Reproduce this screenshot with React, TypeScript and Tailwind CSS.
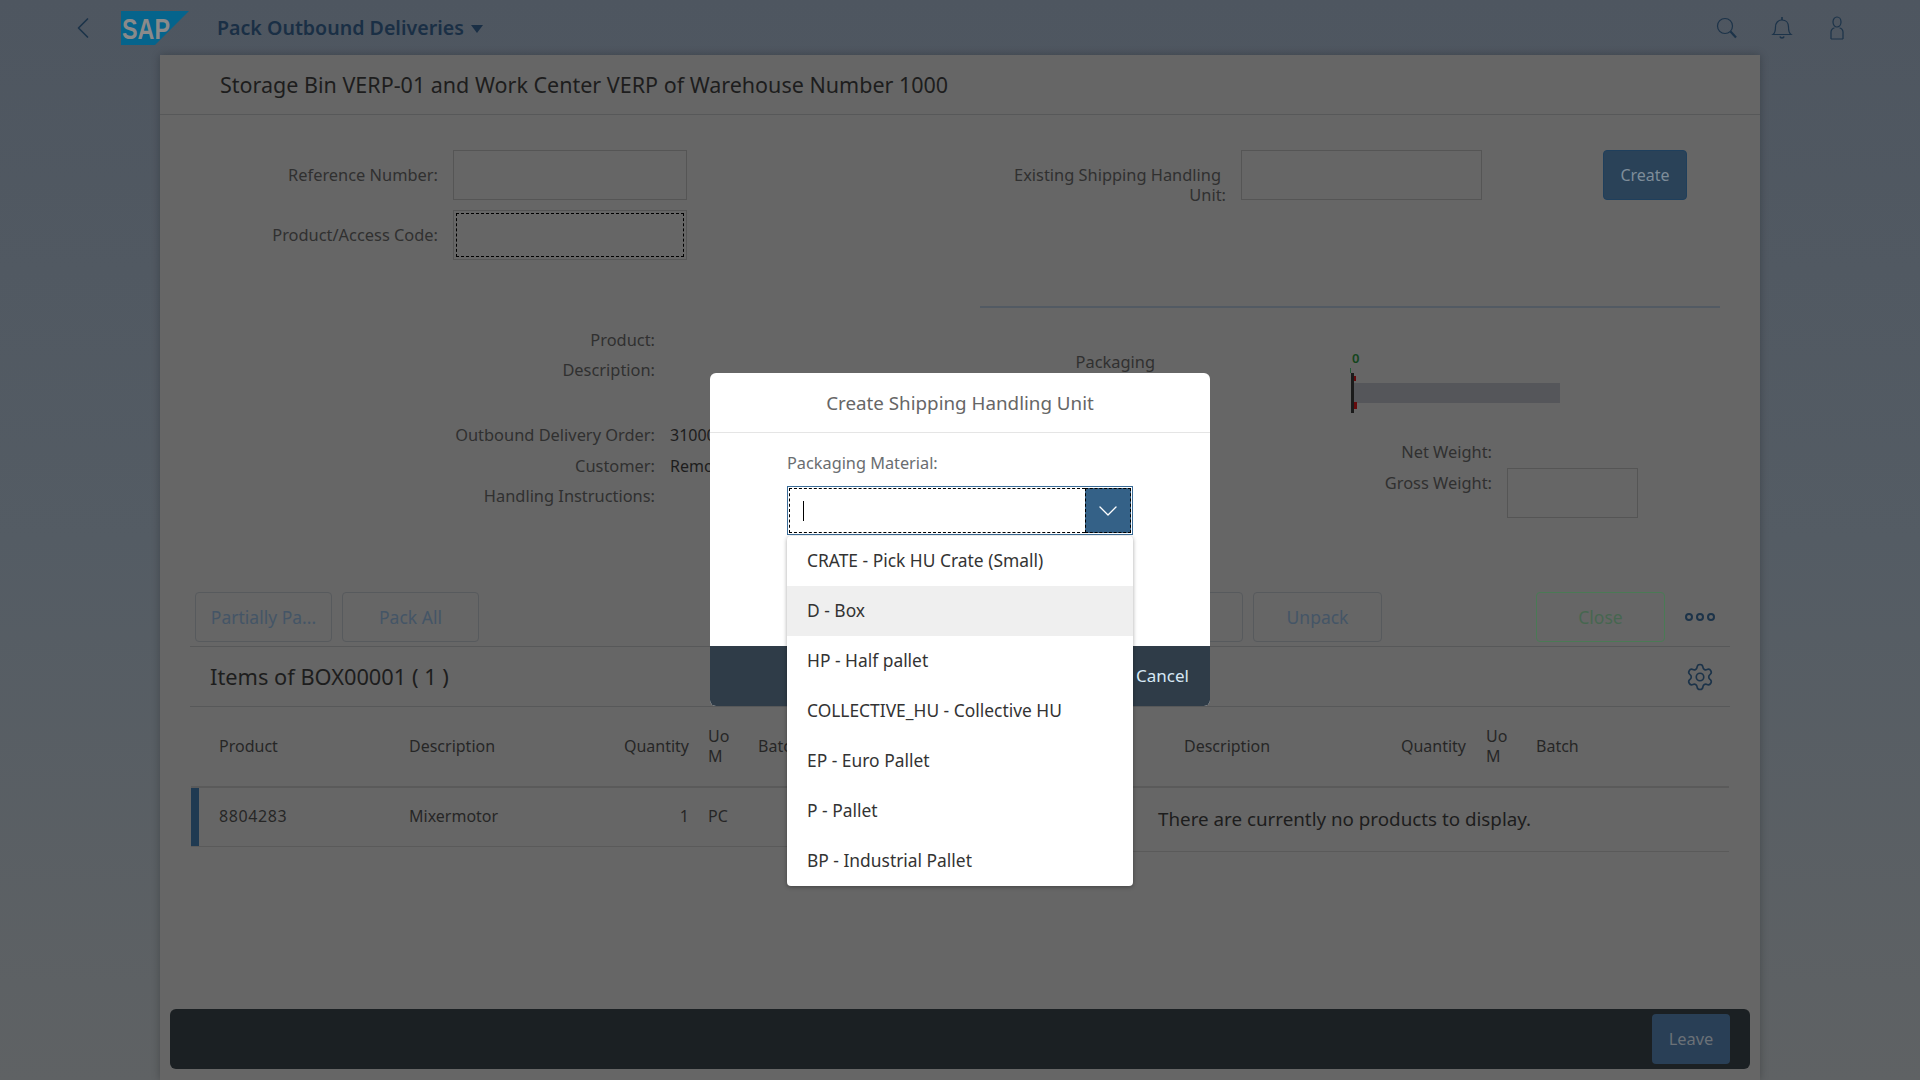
import React from 'react';
import { ChevronDown, ChevronLeft, Settings } from 'lucide-react';

const font = { sans: "font-['Noto_Sans','Open_Sans',sans-serif]" };

const packagingOptions = [
  'CRATE - Pick HU Crate (Small)',
  'D - Box',
  'HP - Half pallet',
  'COLLECTIVE_HU - Collective HU',
  'EP - Euro Pallet',
  'P - Pallet',
  'BP - Industrial Pallet',
];

const Label = ({ children, className = '' }: { children: React.ReactNode; className?: string }) => (
  <span className={`text-right text-[16.4px] leading-[20px] text-[#303030] ${className}`}>{children}</span>
);

const ToolButton = ({ children, className = '' }: { children: React.ReactNode; className?: string }) => (
  <button className={`h-[50px] rounded-[4px] border border-[#575a5d] text-[17.5px] text-[#445566] ${className}`}>
    {children}
  </button>
);

const App = () => {
  return (
    <div className={`relative h-[1080px] w-full overflow-hidden bg-gradient-to-b from-[#4e5660] via-[#545c64] to-[#5f6264] ${font.sans}`}>
      {/* Shell bar */}
      <header className="flex h-[55px] items-center">
        <ChevronLeft className="ml-[65px] h-[36px] w-[36px] text-[#1c3349]" strokeWidth={1.1} />
        <svg className="ml-[20px] h-[34px] w-[68px]" viewBox="0 0 68 34">
          <polygon points="0,0 68,0 34,34 0,34" fill="#05648c" />
          <text x="1" y="28" fontFamily="Liberation Sans" fontWeight="700" fontSize="30" textLength="48" lengthAdjust="spacingAndGlyphs" fill="#8a8a8a">
            SAP
          </text>
        </svg>
        <span className="ml-[28px] text-[19.6px] font-semibold leading-none text-[#1a2f45]">Pack Outbound Deliveries</span>
        <span className="ml-[7px] mt-[2px] h-0 w-0 border-x-[6px] border-t-[8px] border-x-transparent border-t-[#1a2f45]" />
        <div className="ml-auto mr-[72px] flex items-center gap-[33px] text-[#1c3349]">
          <svg className="h-[22px] w-[22px]" viewBox="0 0 22 22" fill="none" stroke="currentColor">
            <circle cx="9" cy="9" r="7.5" strokeWidth="1.2" />
            <path d="M14.5 14.5 L20 20.5" strokeWidth="2.2" />
          </svg>
          <svg className="h-[24px] w-[22px]" viewBox="0 0 22 24" fill="none" stroke="currentColor" strokeWidth="1.2">
            <path d="M2 18.5c2-1.5 2.5-3.5 2.5-7.5 0-4 2.5-7 6.5-7s6.5 3 6.5 7c0 4 .5 6 2.5 7.5z" />
            <path d="M11 1v3M9 20.5c.5 2 3.5 2 4 0" strokeWidth="1.6" />
          </svg>
          <svg className="h-[24px] w-[22px]" viewBox="0 0 22 24" fill="none" stroke="currentColor" strokeWidth="1.2">
            <ellipse cx="11" cy="6" rx="4" ry="5" />
            <path d="M5 23V16c0-2.5 2-4 3.5-4M17 23V16c0-2.5-2-4-3.5-4M5 23h12" />
          </svg>
        </div>
      </header>

      {/* Page */}
      <main className="mx-[160px] flex h-[1025px] flex-col bg-[#666666] shadow-[0_0_8px_rgba(0,0,0,0.25)]">
        <div className="flex h-[60px] items-center border-b border-[#575859] pl-[60px]">
          <h1 className="text-[21.5px] leading-none text-[#1d1d1d]">
            Storage Bin VERP-01 and Work Center VERP of Warehouse Number 1000
          </h1>
        </div>

        {/* Scan form */}
        <section className="flex h-[191px] pt-[35px]">
          <div className="grid h-fit w-[527px] grid-cols-[278px_234px] gap-x-[15px] gap-y-[10px]">
            <Label className="self-center">Reference Number:</Label>
            <div className="h-[50px] border border-[#555555]" />
            <Label className="self-center">Product/Access Code:</Label>
            <div className="h-[50px] border border-[#555555] p-[2px]">
              <div className="h-full border border-dashed border-black" />
            </div>
          </div>
          <div className="ml-[313px] w-[226px] pt-[15px]">
            <Label className="block">
              <span className="pr-[5px]">Existing Shipping Handling</span>
              <br />
              Unit:
            </Label>
          </div>
          <div className="ml-[15px] h-[50px] w-[241px] border border-[#555555]" />
          <button className="ml-[121px] h-[50px] w-[84px] rounded-[4px] border border-[#1f3f5c] bg-[#2a4258] text-[16px] text-[#7e8d9a]">
            Create
          </button>
        </section>
        <div className="ml-[820px] h-[2px] w-[740px] bg-[#525a63]" />

        {/* Details */}
        <section className="flex h-[284px]">
          <div className="ml-[160px] flex w-[335px] flex-col items-end pt-[17px]">
            <Label className="h-[30px] leading-[30px]">Product:</Label>
            <Label className="h-[30px] leading-[30px]">Description:</Label>
            <Label className="mt-[35px] h-[31px] leading-[30px]">Outbound Delivery Order:</Label>
            <Label className="h-[30px] leading-[30px]">Customer:</Label>
            <Label className="h-[30px] leading-[30px]">Handling Instructions:</Label>
          </div>
          <div className="ml-[15px] flex w-[100px] flex-col pt-[112px] text-[16px] leading-[30px] text-[#1d1d1d]">
            <span className="h-[31px]">3100000127</span>
            <span>Remo</span>
          </div>
          <div className="ml-[235px] flex h-full flex-col">
            <div className="flex">
              <Label className="mt-[44px] w-[150px]">Packaging Material:</Label>
              <div className="ml-[196px] mt-[43px] flex h-[65px] flex-col">
                <span className="ml-[1px] h-[14px] text-[13px] font-semibold leading-[14px] text-[#14451c]">0</span>
                <span className="ml-[-1px] mt-[3px] h-[5px] w-[1px] bg-[#255a38]" />
                <div className="relative flex h-[40px] items-center">
                  <div className="h-full w-[3px] bg-[#1b1b1b]" />
                  <div className="h-[20px] w-[206px] bg-[#55565a]" />
                  <span className="absolute left-[3px] top-[3px] h-[5px] w-[2px] bg-[#650a0c]" />
                  <span className="absolute left-[3px] top-[29px] h-[7px] w-[3px] bg-[#650a0c]" />
                </div>
              </div>
            </div>
            <div className="ml-[348px] mt-[26px] flex flex-col">
              <div className="flex w-[139px] justify-end">
                <Label>Net Weight:</Label>
              </div>
              <div className="mt-[11px] flex">
                <div className="flex w-[139px] justify-end">
                  <Label>Gross Weight:</Label>
                </div>
                <div className="ml-[15px] mt-[-5px] h-[50px] w-[131px] border border-[#555555]" />
              </div>
            </div>
          </div>
        </section>

        {/* Toolbar */}
        <div className="mx-[30px] flex h-[55px] gap-[10px] border-b border-[#575859] pl-[5px]">
          <ToolButton className="w-[137px]">Partially Pa...</ToolButton>
          <ToolButton className="w-[137px]">Pack All</ToolButton>
          <ToolButton className="ml-[594px] w-[160px]">Unpack All</ToolButton>
          <ToolButton className="w-[129px]">Unpack</ToolButton>
          <button className="ml-[144px] h-[50px] w-[129px] rounded-[4px] border border-[#4a7a55] text-[17.5px] text-[#466650]">
            Close
          </button>
          <div className="ml-[10px] flex h-[50px] items-center gap-[3px]">
            {[0, 1, 2].map((dot) => (
              <span key={dot} className="h-[8px] w-[8px] rounded-full border-2 border-[#1c3349]" />
            ))}
          </div>
        </div>

        <div className="mx-[30px] flex h-[60px] items-center justify-between border-b border-[#575859] pl-[20px] pr-[15px]">
          <h2 className="text-[21.8px] leading-none text-[#1d1d1d]">Items of BOX00001 ( 1 )</h2>
          <Settings className="h-[30px] w-[30px] text-[#1c3349]" strokeWidth={1.3} />
        </div>

        {/* Tables */}
        <div className="ml-[31px] mr-[31px] flex text-[16px] text-[#262626]">
          <div className="w-[942px]">
            <div className="grid h-[81px] grid-cols-[218px_191px_89px_69px_1fr] items-center border-b-2 border-[#5a5a5a] pb-[2px] leading-[20px]">
              <span className="pl-[28px]">Product</span>
              <span>Description</span>
              <span className="text-right">Quantity</span>
              <span className="w-[50px] pl-[19px]">Uo M</span>
              <span>Batch</span>
            </div>
            <div className="grid h-[59px] grid-cols-[218px_191px_89px_69px_1fr] items-center border-b border-[#5a5a5a] leading-[20px]">
              <span className="flex h-full items-center">
                <span className="h-full w-[8px] bg-[#1f3a52]" />
                <span className="mb-[2px] pl-[20px] tracking-[0.6px]">8804283</span>
              </span>
              <span className="mb-[2px]">Mixermotor</span>
              <span className="mb-[2px] text-right">1</span>
              <span className="mb-[2px] pl-[19px]">PC</span>
            </div>
          </div>
          <div className="flex-1">
            <div className="grid h-[81px] grid-cols-[51px_190px_92px_70px_1fr] items-center border-b-2 border-[#5a5a5a] pb-[2px] leading-[20px]">
              <span />
              <span>Description</span>
              <span className="text-right">Quantity</span>
              <span className="w-[50px] pl-[20px]">Uo M</span>
              <span>Batch</span>
            </div>
            <div className="flex h-[64px] items-center border-b border-[#5a5a5a] pl-[25px] text-[18.8px] text-[#1d1d1d]">
              There are currently no products to display.
            </div>
          </div>
        </div>

        {/* Footer */}
        <footer className="mx-[10px] mt-auto mb-[11px] flex h-[60px] items-center justify-end rounded-[6px] bg-[#1b2023] pr-[20px]">
          <button className="h-[50px] w-[78px] rounded-[4px] bg-[#293f56] text-[16.4px] text-[#6b7177]">Leave</button>
        </footer>
      </main>

      {/* Dialog */}
      <div className="absolute left-[710px] top-[373px] flex h-[333px] w-[500px] flex-col overflow-hidden rounded-[6px] bg-white">
        <div className="flex h-[60px] items-center justify-center border-b border-[#e5e5e5] pt-[1px] text-[18.8px] text-[#666666]">
          Create Shipping Handling Unit
        </div>
        <div className="flex-1 pl-[77px] pt-[19px]">
          <div className="text-[16.3px] leading-[22px] text-[#6a6d70]">Packaging Material:</div>
          <div className="mt-[12px] flex h-[49px] w-[346px] border border-[#3a6c97] p-[1px]">
            <div className="flex flex-1 items-center border border-r-0 border-dashed border-black pl-[13px]">
              <span className="h-[20px] w-[1px] bg-black" />
            </div>
            <div className="flex w-[46px] items-center justify-center border border-dashed border-black bg-[#346187]">
              <ChevronDown className="h-[32px] w-[32px] text-white" strokeWidth={1} />
            </div>
          </div>
        </div>
        <div className="flex h-[60px] items-center justify-end bg-[#2f3c48] pr-[21px] text-[17px] text-[#d7e8f5]">
          Cancel
        </div>
      </div>

      {/* Dropdown */}
      <ul className="absolute left-[787px] top-[536px] w-[346px] overflow-hidden rounded-[4px] bg-white shadow-[0_1px_4px_rgba(0,0,0,0.35)]">
        {packagingOptions.map((option) => (
          <li
            key={option}
            className={`flex h-[50px] items-center pb-[2px] pl-[20px] text-[17.4px] text-[#333333] ${option === 'D - Box' ? 'bg-[#efefef]' : ''}`}
          >
            {option}
          </li>
        ))}
      </ul>
    </div>
  );
};

export default App;
